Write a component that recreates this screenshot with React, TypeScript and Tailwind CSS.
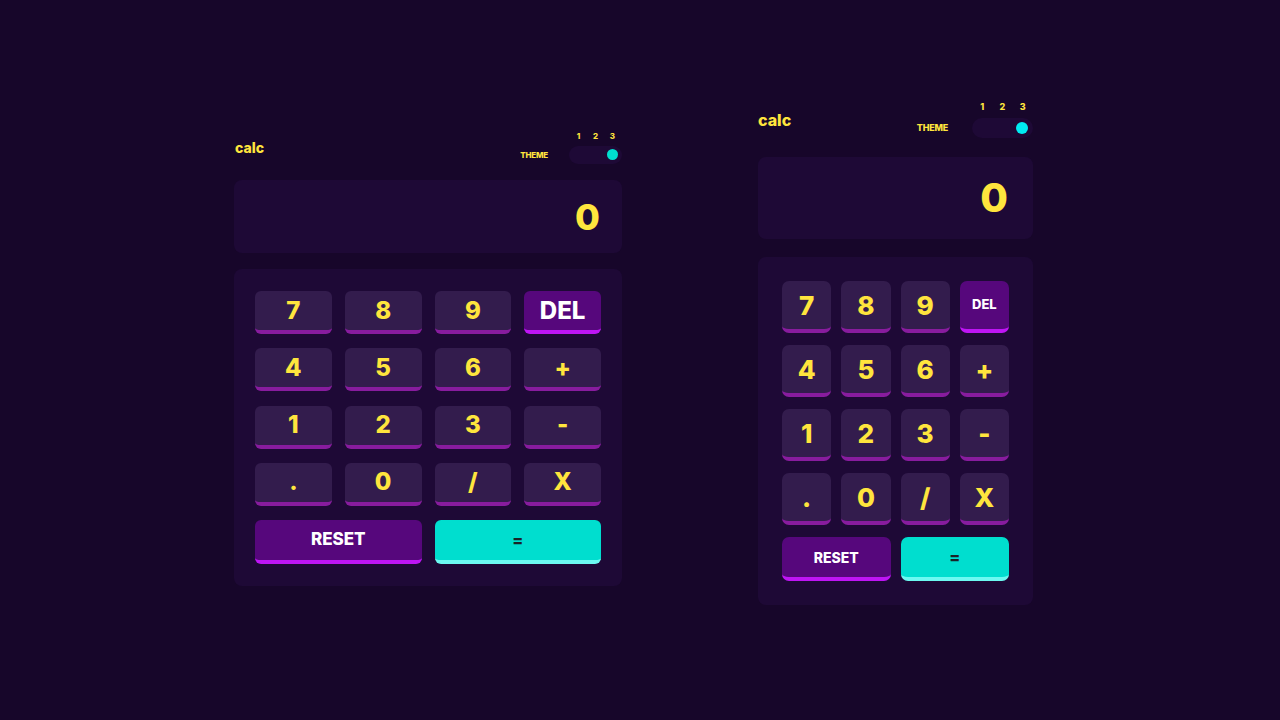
import React from 'react';

type Variant = {
  wrap: string;
  header: string;
  logo: string;
  theme: string;
  numbers: string;
  toggle: string;
  knob: string;
  screen: string;
  screenText: string;
  pad: string;
  key: string;
  digit: string;
  del: string;
  wide: string;
  reset: string;
  equals: string;
};

const large: Variant = {
  wrap: 'w-[388px] mt-[131px]',
  header: 'h-[33px] flex items-center justify-between',
  logo: 'text-[14px] pl-[1px]',
  theme: 'text-[8px] h-[18px] mr-[21px] tracking-tight',
  numbers: 'text-[8px] leading-[9px] mb-[5px] px-[1px]',
  toggle: 'w-[53px] h-[18px] pr-[4px]',
  knob: 'w-[11px] h-[11px] bg-[#00decf]',
  screen: 'h-[73px] mt-[16px] pr-[22px] rounded-[8px]',
  screenText: 'text-[36px]',
  pad: 'mt-[16px] pt-[22px] pb-[22px] px-[21px] gap-x-[13px] gap-y-[14.3px] rounded-[8px]',
  key: 'h-[43px] rounded-[6px]',
  digit: 'text-[24px]',
  del: 'text-[24px]',
  wide: 'h-[44px] rounded-[6px]',
  reset: 'text-[17px]',
  equals: 'text-[16px]',
};

const small: Variant = {
  wrap: 'w-[275px] mt-[102px]',
  header: 'h-[36px] flex items-center justify-between',
  logo: 'text-[16px]',
  theme: 'text-[9px] h-[20px] mr-[24px] tracking-tight',
  numbers: 'text-[9px] leading-[10px] mb-[6px]',
  toggle: 'w-[61px] h-[20px] pr-[5px]',
  knob: 'w-[12px] h-[12px] bg-[#00ecf2]',
  screen: 'h-[82px] mt-[19px] pr-[25px] rounded-[8px]',
  screenText: 'text-[40px]',
  pad: 'mt-[18px] pt-[24px] pb-[24px] px-[24px] gap-x-[10px] gap-y-[12px] rounded-[8px]',
  key: 'h-[52px] rounded-[7px]',
  digit: 'text-[26px]',
  del: 'text-[13px]',
  wide: 'h-[44px] rounded-[7px]',
  reset: 'text-[14px]',
  equals: 'text-[16px]',
};

const keys = ['7', '8', '9', 'DEL', '4', '5', '6', '+', '1', '2', '3', '-', '.', '0', '/', 'x'];

const Calculator = ({ v }: { v: Variant }) => {
  return (
    <div className={v.wrap}>
      <div className={v.header}>
        <span className={`${v.logo} font-extrabold text-[#ffe53d] leading-none`}>calc</span>
        <div className="flex items-end">
          <span className={`${v.theme} flex items-center font-extrabold text-[#ffe53d]`}>THEME</span>
          <div className="flex flex-col">
            <div className={`${v.numbers} grid grid-cols-3 text-center font-extrabold text-[#ffe53d]`}>
              <span>1</span>
              <span>2</span>
              <span>3</span>
            </div>
            <div className={`${v.toggle} bg-[#1e0936] rounded-full flex items-center justify-end`}>
              <div className={`${v.knob} rounded-full`}></div>
            </div>
          </div>
        </div>
      </div>

      <div className={`${v.screen} bg-[#1e0936] flex items-center justify-end`}>
        <span className={`${v.screenText} font-extrabold text-[#ffe53d] leading-none`}>0</span>
      </div>

      <div className={`${v.pad} bg-[#1e0936] grid grid-cols-4`}>
        {keys.map((k) => (
          <button
            key={k}
            className={
              k === 'DEL'
                ? `${v.key} ${v.del} bg-[#56077c] border-b-4 border-[#be15f4] text-white font-extrabold flex items-center justify-center`
                : `${v.key} ${v.digit} bg-[#331c4d] border-b-4 border-[#881c9e] text-[#ffe53d] font-extrabold uppercase flex items-center justify-center`
            }
          >
            {k}
          </button>
        ))}
        <button
          className={`${v.wide} ${v.reset} col-span-2 bg-[#56077c] border-b-4 border-[#be15f4] text-white font-extrabold flex items-center justify-center`}
        >
          RESET
        </button>
        <button
          className={`${v.wide} ${v.equals} col-span-2 bg-[#00decf] border-b-4 border-[#6cf9f1] text-[#1a2327] font-extrabold flex items-center justify-center`}
        >
          =
        </button>
      </div>
    </div>
  );
};

const App = () => {
  return (
    <div className="min-h-screen w-full bg-[#17062a] font-['Inter','Roboto',sans-serif] flex items-start pl-[234px] gap-[136px]">
      <Calculator v={large} />
      <Calculator v={small} />
    </div>
  );
};

export default App;
